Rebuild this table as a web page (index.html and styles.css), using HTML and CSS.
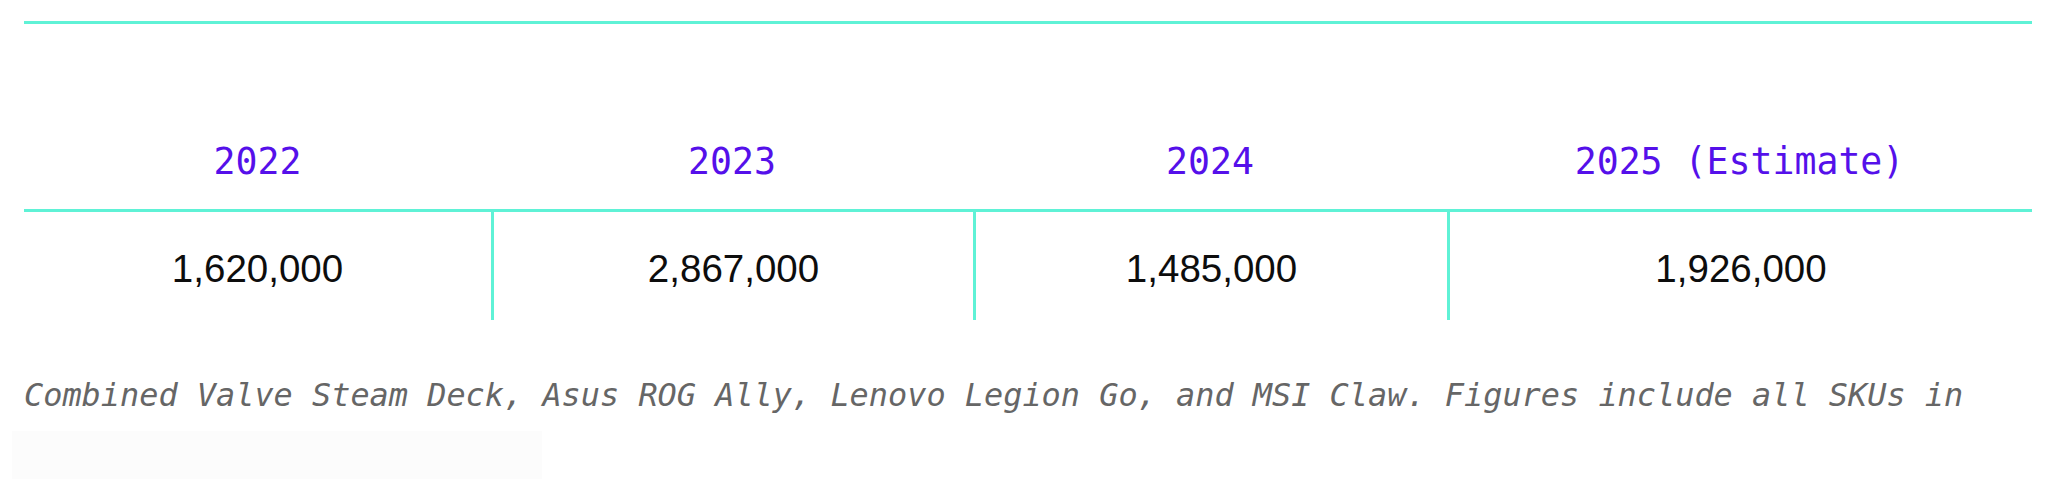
FILE: index.html
```html
<!DOCTYPE html>
<html lang="en">
<head>
<meta charset="utf-8">
<title>Handheld PC shipments</title>
<link rel="stylesheet" href="styles.css">
</head>
<body>
<div class="page">
  <table class="sales">
    <colgroup>
      <col class="col-a">
      <col class="col-b">
      <col class="col-c">
      <col class="col-d">
    </colgroup>
    <thead>
      <tr>
        <th>2022</th>
        <th>2023</th>
        <th>2024</th>
        <th>2025 (Estimate)</th>
      </tr>
    </thead>
    <tbody>
      <tr>
        <td>1,620,000</td>
        <td>2,867,000</td>
        <td>1,485,000</td>
        <td>1,926,000</td>
      </tr>
    </tbody>
  </table>
  <p class="note">Combined Valve Steam Deck, Asus ROG Ally, Lenovo Legion Go, and MSI Claw. Figures include all SKUs in</p>
  <div class="fade"></div>
</div>
</body>
</html>
```
FILE: styles.css
```css
html, body {
  margin: 0;
  background: #ffffff;
}

.page {
  padding: 21px 16px 0 24px;
}

.sales {
  width: 100%;
  table-layout: fixed;
  border-collapse: separate;
  border-spacing: 0;
  border-top: 3px solid #5ff2d6;
}

.col-a { width: 467px; }
.col-b { width: 482px; }
.col-c { width: 474px; }
.col-d { width: 585px; }

.sales th {
  padding: 116px 0 26px;
  font-family: "DejaVu Sans Mono", "Liberation Mono", monospace;
  font-size: 36.5px;
  line-height: 43px;
  font-weight: 400;
  color: #5510ea;
  text-align: center;
  vertical-align: bottom;
  border-bottom: 3px solid #5ff2d6;
}

.sales td {
  padding: 35px 0 29px;
  font-family: "Liberation Sans", Arial, sans-serif;
  font-size: 38.5px;
  line-height: 44px;
  color: #0d0d0d;
  text-align: center;
  vertical-align: middle;
}

.sales td + td {
  border-left: 3px solid #5ff2d6;
}

.note {
  margin: 53px 0 0;
  font-family: "DejaVu Sans Mono", "Liberation Mono", monospace;
  font-style: italic;
  font-size: 31.9px;
  line-height: 45px;
  color: #666666;
  white-space: nowrap;
}

.fade {
  margin: 13px 0 0 -12px;
  width: 530px;
  height: 56px;
  background: #fcfcfc;
}
```
